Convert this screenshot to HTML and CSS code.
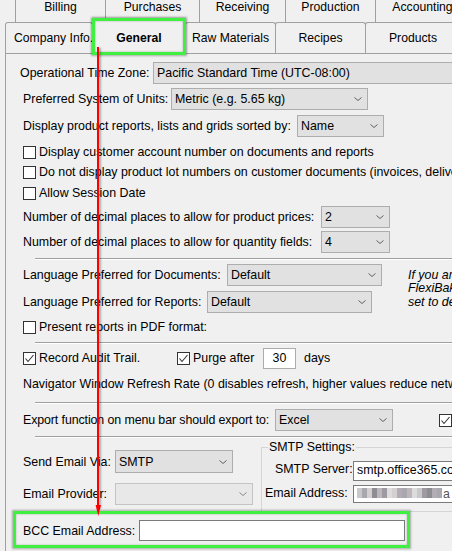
FILE: index.html
```html
<!DOCTYPE html>
<html>
<head>
<meta charset="utf-8">
<link rel="stylesheet" href="styles.css">
</head>
<body>
<div class="window">
  <div class="tabs1">
    <div class="t1 w90">Billing</div>
    <div class="t1 w94">Purchases</div>
    <div class="t1 w86">Receiving</div>
    <div class="t1 w90">Production</div>
    <div class="t1 w95 last">Accounting</div>
  </div>
  <div class="tabs2">
    <div class="t2 first left w88">Company Info.</div>
    <div class="t2 active w94">General</div>
    <div class="t2 w91">Raw Materials</div>
    <div class="t2 w91">Recipes</div>
    <div class="t2 w96">Products</div>
  </div>
  <div class="panel">
    <div class="row m8">
      <span class="lbl lw133 shiftl">Operational Time Zone:</span>
      <div class="select sw400"><span>Pacific Standard Time (UTC-08:00)</span></div>
    </div>
    <div class="row m4">
      <span class="lbl lw148">Preferred System of Units:</span>
      <div class="select sw197"><span>Metric (e.g. 5.65 kg)</span><svg class="chev" viewBox="0 0 8 4"><polyline points="0.5,0.5 4,3.5 7.5,0.5"/></svg></div>
    </div>
    <div class="row m5">
      <span class="lbl lw274">Display product reports, lists and grids sorted by:</span>
      <div class="select sw87"><span>Name</span><svg class="chev" viewBox="0 0 8 4"><polyline points="0.5,0.5 4,3.5 7.5,0.5"/></svg></div>
    </div>
    <div class="row cb m5">
      <span class="box"></span><span>Display customer account number on documents and reports</span>
    </div>
    <div class="row cb">
      <span class="box"></span><span>Do not display product lot numbers on customer documents (invoices, deliveries)</span>
    </div>
    <div class="row cb m1">
      <span class="box"></span><span>Allow Session Date</span>
    </div>
    <div class="row m3">
      <span class="lbl lw298">Number of decimal places to allow for product prices:</span>
      <div class="select sw69"><span>2</span><svg class="chev" viewBox="0 0 8 4"><polyline points="0.5,0.5 4,3.5 7.5,0.5"/></svg></div>
    </div>
    <div class="row m3">
      <span class="lbl lw298">Number of decimal places to allow for quantity fields:</span>
      <div class="select sw69"><span>4</span><svg class="chev" viewBox="0 0 8 4"><polyline points="0.5,0.5 4,3.5 7.5,0.5"/></svg></div>
    </div>
    <div class="sep m5"></div>
    <div class="lang m4">
      <div class="langcol">
        <div class="row">
          <span class="lbl lw204">Language Preferred for Documents:</span>
          <div class="select sw155"><span>Default</span><svg class="chev" viewBox="0 0 8 4"><polyline points="0.5,0.5 4,3.5 7.5,0.5"/></svg></div>
        </div>
        <div class="row m5">
          <span class="lbl lw184">Language Preferred for Reports:</span>
          <div class="select sw165"><span>Default</span><svg class="chev" viewBox="0 0 8 4"><polyline points="0.5,0.5 4,3.5 7.5,0.5"/></svg></div>
        </div>
      </div>
      <div class="note">
        <div>If you are using</div>
        <div>FlexiBake in a language</div>
        <div>set to default</div>
      </div>
    </div>
    <div class="row cb m4">
      <span class="box"></span><span>Present reports in PDF format:</span>
    </div>
    <div class="sep m5"></div>
    <div class="row m3">
      <div class="audit">
        <span class="box checked"><svg viewBox="0 0 11 11"><polyline points="1.5,5.5 4,8.5 9.5,2"/></svg></span><span>Record Audit Trail.</span>
      </div>
      <span class="box checked"><svg viewBox="0 0 11 11"><polyline points="1.5,5.5 4,8.5 9.5,2"/></svg></span><span class="purge">Purge after</span>
      <div class="days">30</div>
      <span>days</span>
    </div>
    <div class="row cb m5">
      <span>Navigator Window Refresh Rate (0 disables refresh, higher values reduce network traffic):</span>
    </div>
    <div class="sep m8"></div>
    <div class="row m5">
      <span class="lbl lw252 tight">Export function on menu bar should export to:</span>
      <div class="select sw118"><span>Excel</span><svg class="chev" viewBox="0 0 8 4"><polyline points="0.5,0.5 4,3.5 7.5,0.5"/></svg></div>
      <span class="box checked exportbox"><svg viewBox="0 0 11 11"><polyline points="1.5,5.5 4,8.5 9.5,2"/></svg></span>
    </div>
    <div class="sep m5"></div>
    <div class="bottom">
      <div class="leftcol">
        <div class="row h23 m12">
          <span class="lbl lw92">Send Email Via:</span>
          <div class="select sw118 h23"><span>SMTP</span><svg class="chev" viewBox="0 0 8 4"><polyline points="0.5,0.5 4,3.5 7.5,0.5"/></svg></div>
        </div>
        <div class="row m10">
          <span class="lbl lw92">Email Provider:</span>
          <div class="select disabled sw138"><span></span><svg class="chev" viewBox="0 0 8 4"><polyline points="0.5,0.5 4,3.5 7.5,0.5"/></svg></div>
        </div>
      </div>
      <fieldset class="group">
        <legend>SMTP Settings:</legend>
        <div class="frow m7">
          <span class="flabel pl15">SMTP Server:</span>
          <div class="field">smtp.office365.com</div>
        </div>
        <div class="frow m4">
          <span class="flabel pl4">Email Address:</span>
          <div class="field h19">
            <span class="blur b1"></span><span class="blur b2"></span><span class="blur b3"></span><span class="blur b4"></span><span class="blur b5"></span><span class="blur b6"></span><span class="blur b7"></span><span class="blur b3"></span><span class="blur b8"></span><span class="blur b2"></span><span class="blur b5"></span><span class="blur b7"></span><span class="blur b1"></span><span class="blur b6"></span><span class="blur b4"></span><span class="blur b8"></span><span class="blur b2"></span><span class="tail">a</span>
          </div>
        </div>
      </fieldset>
    </div>
    <div class="row m8 h21">
      <span class="lbl lw116">BCC Email Address:</span>
      <div class="bcc"></div>
    </div>
  </div>

  <div class="hl hl-tab"></div>
  <div class="hl hl-bcc"></div>
  <div class="arrow-line"></div>
  <svg class="arrow-head" viewBox="0 0 9 14"><polygon points="1.6,1 7,1 4.3,12"/></svg>
</div>
</body>
</html>
```

FILE: styles.css
```css
* { box-sizing: border-box; }
html, body { margin: 0; padding: 0; overflow: hidden; background: #f0f0f0; }
body { font-family: "Liberation Sans", Arial, sans-serif; font-size: 12.4px; color: #000; }
.window { position: relative; width: 452px; height: 551px; overflow: hidden; background: #f0f0f0; }

/* top tab row */
.tabs1 { display: flex; height: 22px; padding-left: 15px; white-space: nowrap; font-size: 12.2px; }
.t1 { flex: none; height: 22px; border-left: 1px solid #a0a0a0; text-align: center; line-height: 14px; }
.t1.last { border-right: 1px solid #a0a0a0; }

/* second tab row */
.tabs2 { display: flex; height: 31px; padding-left: 5px; white-space: nowrap; font-size: 12.2px; }
.t2 { flex: none; height: 31px; margin-left: -1px; border: 1px solid #a0a0a0; border-bottom: none;
  border-radius: 3px 3px 0 0; line-height: 30px; text-align: center; background: #f0f0f0; }
.t2.first { margin-left: 0; }
.t2.left { text-align: left; padding-left: 8px; }
.t2.active { position: relative; z-index: 2; height: 35px; margin-top: -3px; padding-top: 2px;
  line-height: 32px; font-weight: bold; box-shadow: 0 -1px 2px rgba(0,0,0,0.25); }

.w86 { width: 86px; } .w88 { width: 88px; } .w90 { width: 90px; } .w91 { width: 91px; }
.w94 { width: 94px; } .w95 { width: 95px; } .w96 { width: 96px; }

/* panel */
.panel { margin-left: 5px; width: 600px; height: 498px; border-top: 1px solid #a0a0a0; border-left: 1px solid #a0a0a0; padding-left: 17px; }
.row { display: flex; align-items: center; height: 22px; white-space: nowrap; }
.row.cb { height: 20px; }
.h21 { height: 21px; }
.h23 { height: 23px; }
.m1 { margin-top: 1px; } .m3 { margin-top: 3px; } .m4 { margin-top: 4px; } .m5 { margin-top: 5px; }
.m7 { margin-top: 7px; } .m8 { margin-top: 8px; } .m10 { margin-top: 10px; } .m12 { margin-top: 12px; }

.lbl { flex: none; }
.tight { letter-spacing: -0.1px; }
.shiftl { margin-left: -3px; }
.lw92 { width: 92px; } .lw116 { width: 116px; } .lw133 { width: 133px; } .lw148 { width: 148px; }
.lw184 { width: 184px; } .lw204 { width: 204px; } .lw252 { width: 252px; } .lw274 { width: 274px; } .lw298 { width: 298px; }

.select { flex: none; height: 22px; display: flex; align-items: center; justify-content: space-between;
  background: #e1e1e1; border: 1px solid #adadad; padding: 0 5px 0 3px; }
.select.h23 { height: 23px; }
.select.disabled { background: #e8e8e8; border-color: #c4c4c4; }
.select.disabled .chev polyline { stroke: #8a8a8a; }
.sw69 { width: 69px; } .sw87 { width: 87px; } .sw118 { width: 118px; } .sw138 { width: 138px; }
.sw155 { width: 155px; } .sw165 { width: 165px; } .sw197 { width: 197px; } .sw400 { width: 400px; }
.chev { width: 8px; height: 4px; flex: none; }
.chev polyline { fill: none; stroke: #606060; stroke-width: 1; }

.box { flex: none; width: 13px; height: 13px; border: 1px solid #333; background: #fff; margin-right: 3px; display: flex; }
.box svg { width: 11px; height: 11px; }
.box svg polyline { fill: none; stroke: #333; stroke-width: 1.1; }
.exportbox { margin-left: 46px; }
.purge { width: 70px; flex: none; }

.sep { width: 600px; height: 2px; margin-left: 12px; border-top: 1px solid #a0a0a0; border-bottom: 1px solid #fff; }

.lang { display: flex; }
.langcol { width: 385px; flex: none; }
.note { margin-top: 5px; font-style: italic; line-height: 13.3px; white-space: nowrap; }

.audit { flex: none; width: 154px; display: flex; align-items: center; }
.days { flex: none; width: 33px; height: 21px; margin: 0 8px 0 0; background: #fff; border: 1px solid #acacac; text-align: center; line-height: 19px; }

/* bottom section */
.bottom { display: flex; }
.leftcol { flex: none; width: 238px; }
.group { flex: none; width: 300px; min-width: 0; margin: 2px 0 0 0; padding: 0 0 8px 0; border: 1px solid #d5d5d5; }
.group legend { margin-left: 6px; padding: 0 1px; line-height: 14px; }
.frow { display: flex; align-items: flex-start; white-space: nowrap; }
.flabel { flex: none; width: 91px; line-height: 14px; margin-top: 1px; }
.pl15 { padding-left: 13px; } .pl4 { padding-left: 3px; }
.field { flex: none; width: 200px; height: 20px; background: #fff; border: 1px solid #7a7a7a; padding: 1px 0 0 3px; line-height: 14px; display: flex; align-items: flex-start; }
.field.h19 { height: 18px; padding-top: 1px; }
.blur { flex: none; width: 5px; height: 10px; margin-top: 1px; }
.b1 { background: #c9c9cc; } .b2 { background: #a9a8ae; } .b3 { background: #d6cfd2; } .b4 { background: #8e8d94; }
.b5 { background: #bdb6bb; } .b6 { background: #9f9aa2; } .b7 { background: #dcdcdc; } .b8 { background: #b2adb5; }
.tail { margin-left: 1px; color: #555; }

.bcc { flex: none; width: 266px; height: 21px; background: #fff; border: 1px solid #7a7a7a; }

/* overlays */
.hl { position: absolute; border: 3px solid #40f040; box-shadow: 0 0 2px 1px rgba(0,0,0,0.3), inset 0 0 2px rgba(0,0,0,0.3); z-index: 5; }
.hl-tab { left: 92px; top: 18px; width: 94px; height: 37px; }
.hl-bcc { left: 13px; top: 511px; width: 397px; height: 37px; }
.arrow-line { position: absolute; left: 97px; top: 47px; width: 2px; height: 461px; background: #ff0000; box-shadow: 2px 1px 2px rgba(0,0,0,0.3); z-index: 6; }
.arrow-head { position: absolute; left: 94px; top: 504px; width: 9px; height: 14px; z-index: 6; }
.arrow-head polygon { fill: #ff0000; }
```
